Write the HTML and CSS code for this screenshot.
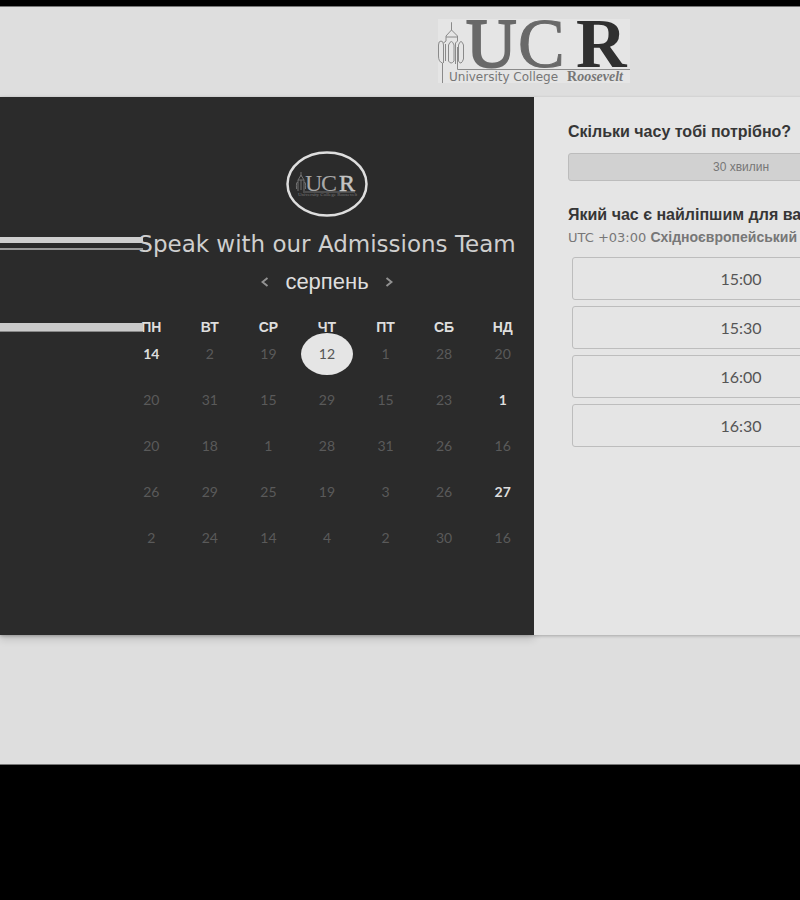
FILE: index.html
```html
<!DOCTYPE html>
<html lang="uk">
<head>
<meta charset="utf-8">
<meta name="viewport" content="width=device-width, initial-scale=1">
<title>University College Roosevelt</title>
<link rel="stylesheet" href="styles.css">
</head>
<body>
<div class="page">
  <header class="header">
    <svg class="logo" viewBox="0 0 192 64" role="img" aria-label="University College Roosevelt">
      <rect width="192" height="64" fill="#e5e5e5"/>
      <g fill="none" stroke="#8a8a8a" stroke-width="1">
        <path d="M4.500 64V44Q0.500 43 0.500 37V26Q0.500 22 3 22Q5.500 22 5.500 26V44"/>
        <path d="M5.500 24L8 22V17L13.500 11V3.500V11L19.500 17V22L17.500 24V45"/>
        <path d="M8 18H19M7.500 25V42M10.500 42V26Q13.500 19 16 26V42Q13 46 10.500 42M20.500 42V26Q23 19 25.500 26V40Q23 47 20.500 42"/>
        <path d="M19.500 28V50.500H192"/>
      </g>
      <g class="logo-letters" font-size="70">
        <text x="28" y="48" fill="#696969" stroke="#696969" stroke-width="2">U</text>
        <text x="80" y="48" fill="#696969" stroke="#696969" stroke-width="1">C</text>
        <text x="138" y="48" fill="#303030" font-weight="bold">R</text>
      </g>
      <text class="logo-name" x="11" y="62">University College</text>
      <text class="logo-roosevelt" x="129" y="62">R<tspan font-style="italic">oosevelt</tspan></text>
    </svg>
  </header>
  <main class="card">
    <section class="schedule">
      <div class="calendar">
        <svg class="badge" viewBox="0 0 82 66" role="img" aria-label="UCR">
          <ellipse cx="41" cy="33" rx="39.500" ry="31.500" fill="none" stroke="#dedede" stroke-width="2.500"/>
          <g fill="none" stroke="#707070" stroke-width="1">
            <path d="M15 26V21M15 24L12 29V40M15 24L18 29V40M12 29H18M15 29V39M12 32Q10 29 10.500 38M18 32Q20 29 19.500 38M17 41H69"/>
          </g>
          <g class="logo-letters" font-size="24">
            <text x="19" y="40" fill="#a8a8a8">U</text>
            <text x="35" y="40" fill="#a8a8a8">C</text>
            <text x="53" y="40" fill="#c4c4c4" stroke="#c4c4c4" stroke-width="0.500">R</text>
          </g>
          <text class="badge-name" x="12" y="45">University College Roosevelt</text>
        </svg>
        <h1 class="title">Speak with our Admissions Team</h1>
        <div class="month">
          <button type="button" aria-label="Попередній місяць"><svg viewBox="0 0 8 10"><path d="M6.500 1L1.500 5L6.500 9"/></svg></button>
          <h2>серпень</h2>
          <button type="button" aria-label="Наступний місяць"><svg viewBox="0 0 8 10"><path d="M1.500 1L6.500 5L1.500 9"/></svg></button>
        </div>
        <table class="days">
          <thead><tr><th>ПН</th><th>ВТ</th><th>СР</th><th>ЧТ</th><th>ПТ</th><th>СБ</th><th>НД</th></tr></thead>
          <tbody>
            <tr><td class="open">14</td><td>2</td><td>19</td><td><button type="button" class="selected">12</button></td><td>1</td><td>28</td><td>20</td></tr>
            <tr><td>20</td><td>31</td><td>15</td><td>29</td><td>15</td><td>23</td><td class="open">1</td></tr>
            <tr><td>20</td><td>18</td><td>1</td><td>28</td><td>31</td><td>26</td><td>16</td></tr>
            <tr><td>26</td><td>29</td><td>25</td><td>19</td><td>3</td><td>26</td><td class="open">27</td></tr>
            <tr><td>2</td><td>24</td><td>14</td><td>4</td><td>2</td><td>30</td><td>16</td></tr>
          </tbody>
        </table>
      </div>
      <div class="stripe stripe-title"></div>
      <div class="stripe stripe-week"></div>
    </section>
    <section class="booking">
      <div class="options">
        <h2>Скільки часу тобі потрібно?</h2>
        <button type="button" class="duration">30 хвилин</button>
        <h2>Який час є найліпшим для вас?</h2>
        <p class="zone">UTC +03:00 <b>Східноєвропейський час</b></p>
        <div class="times">
          <button type="button">15:00</button>
          <button type="button">15:30</button>
          <button type="button">16:00</button>
          <button type="button">16:30</button>
        </div>
      </div>
    </section>
  </main>
</div>
</body>
</html>
```
FILE: styles.css
```css
* { box-sizing: border-box; }
html { background: #000; overflow-x: hidden; }
body { margin: 0; padding-top: 6px; overflow-x: hidden; font-family: Lato, "Liberation Sans", sans-serif; }
h1, h2, p { margin: 0; }
button { font: inherit; color: inherit; padding: 0; cursor: pointer; }

.page {
  min-width: 1068px;
  padding-bottom: 129px;
  background: #dedede;
  border-top: 1px solid #777;
  border-bottom: 1px solid #777;
}
.header { display: flex; justify-content: center; padding: 12px 0 14px; }
.logo { display: block; width: 192px; height: 64px; overflow: visible; }
.logo-letters { font-family: "Liberation Serif", serif; }
.logo-name { font-family: "DejaVu Sans", sans-serif; font-size: 12px; fill: #777; }
.logo-roosevelt { font-family: "Liberation Serif", serif; font-size: 14px; font-weight: bold; fill: #777; }
.badge-name { font-family: "Liberation Serif", serif; font-size: 5px; fill: #777; }

.card {
  display: grid;
  grid-template-columns: 1fr 1fr;
  min-height: 538px;
  background: #e5e5e5;
  box-shadow: 0 1px 3px rgba(0, 0, 0, 0.25);
}
.schedule {
  position: relative;
  display: flex;
  justify-content: flex-end;
  padding: 54px 2px 0 0;
  background: #2b2b2b;
  box-shadow: 0 4px 8px rgba(0, 0, 0, 0.15);
}
.calendar { display: flex; flex-direction: column; align-items: center; width: 410px; }
.badge { display: block; width: 82px; height: 66px; }
.title { margin-top: 12px; font: 400 23px/30px "DejaVu Sans", sans-serif; color: #cfcfcf; white-space: nowrap; }
.month { display: flex; align-items: center; gap: 16px; margin-top: 10px; }
.month h2 { font: 400 22px/26px "Liberation Sans", sans-serif; color: #dedede; }
.month button { display: flex; border: 0; background: none; }
.month svg { width: 8px; height: 10px; fill: none; stroke: #929292; stroke-width: 2; }

.days { width: 100%; margin-top: 28px; table-layout: fixed; border-collapse: collapse; text-align: center; }
.days th { height: 8px; padding: 0; font: bold 14px/8px "Liberation Sans", sans-serif; color: #dedede; }
.days td { height: 46px; padding: 0; font-size: 14px; line-height: 16px; color: #5a5a5a; }
.days .open { font-weight: 700; color: #dedede; }
.selected { display: block; width: 52px; height: 42px; margin: 0 auto; border: 0; border-radius: 50%; background: #e5e5e5; color: #555; }

.stripe { position: absolute; left: 0; width: 143px; }
.stripe-title { top: 140px; height: 13px; border-top: 6px solid #cfcfcf; border-bottom: 2px solid #999; }
.stripe-week { top: 226px; height: 9px; background: #cacaca; border-bottom: 1px solid #888; }

.booking { position: relative; padding: 26px 34px; background: #e5e5e5; }
.options { display: flex; flex-direction: column; max-width: 346px; }
.options h2 { font: bold 16px/18px "Liberation Sans", sans-serif; color: #363636; white-space: nowrap; }
.duration { height: 28px; margin: 12px 0 25px; border: 1px solid #bcbcbc; border-radius: 3px; background: #d1d1d1; font: 12px "Liberation Sans", sans-serif; color: #777; }
.zone { margin-top: 4px; font: 13px/18px "DejaVu Sans", sans-serif; color: #777; white-space: nowrap; }
.zone b { font: bold 14px/18px "Liberation Sans", sans-serif; }
.times { display: flex; flex-direction: column; gap: 6px; padding: 10px 4px 0; }
.times button { height: 43px; border: 1px solid #bdbdbd; border-radius: 3px; background: #e5e5e5; font-size: 16px; color: #555; }
```
